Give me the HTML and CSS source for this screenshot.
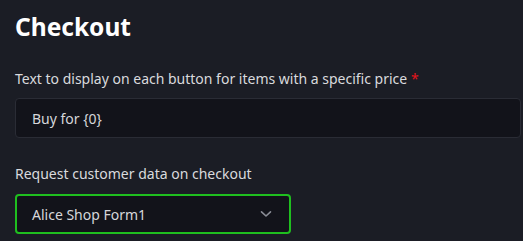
FILE: index.html
```html
<!DOCTYPE html>
<html lang="en">
<head>
<meta charset="utf-8">
<title>Checkout</title>
<link rel="stylesheet" href="styles.css">
</head>
<body>
<main class="panel">
  <h1 class="title">Checkout</h1>
  <div class="field">
    <label class="label">Text to display on each button for items with a specific price <span class="req">*</span></label>
    <div class="input">Buy for {0}</div>
  </div>
  <div class="field">
    <label class="label">Request customer data on checkout</label>
    <div class="select">
      <span>Alice Shop Form1</span>
      <svg class="chev" width="12" height="8" viewBox="0 0 12 8"><path d="M1.5 1.8 L6 6 L10.5 1.8" fill="none" stroke="#8a8d96" stroke-width="1.6" stroke-linecap="round" stroke-linejoin="round"/></svg>
    </div>
  </div>
</main>
</body>
</html>
```

FILE: styles.css
```css
html, body {
  margin: 0;
  background: #1b1d25;
}
body {
  font-family: "Noto Sans", "Open Sans", sans-serif;
  color: #e6e7ea;
}
.panel {
  padding: 10px 2px 0 15px;
}
.title {
  margin: 0;
  font-size: 24.5px;
  font-weight: 700;
  line-height: 34px;
  color: #ffffff;
}
.field {
  display: flex;
  flex-direction: column;
  align-items: flex-start;
}
.field:first-of-type {
  margin-top: 25px;
}
.field + .field {
  margin-top: 26px;
}
.label {
  font-size: 14px;
  line-height: 20px;
  color: #d9dadd;
  margin-bottom: 9px;
}
.req {
  color: #e5141b;
}
.input {
  box-sizing: border-box;
  width: 506px;
  height: 40px;
  background: #12131a;
  border: 1px solid #2a2c35;
  border-radius: 4px;
  padding: 0 16px;
  display: flex;
  align-items: center;
  font-size: 14px;
  color: #d6d7da;
}
.field + .field .label {
  margin-bottom: 10px;
}
.select {
  box-sizing: border-box;
  width: 276px;
  height: 40px;
  background: #12131a;
  border: 2px solid #1fbf1f;
  border-radius: 4px;
  padding: 0 17px 0 15px;
  display: flex;
  align-items: center;
  justify-content: space-between;
  font-size: 14px;
  color: #d6d7da;
}
.chev {
  display: block;
}
```
